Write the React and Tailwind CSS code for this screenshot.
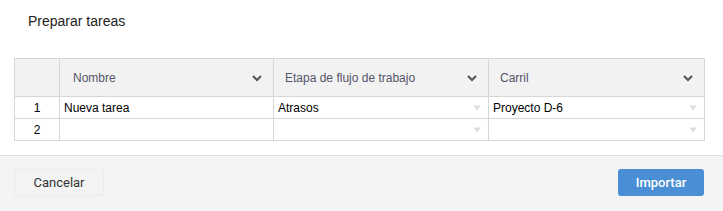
import React from "react";

const Chevron = () => (
  <svg width="12" height="8" viewBox="0 0 12 8" className="shrink-0">
    <path d="M2 2 L6 6 L10 2" fill="none" stroke="#555" strokeWidth="2" />
  </svg>
);

const Tri = () => (
  <svg width="8" height="6" viewBox="0 0 8 6" className="shrink-0">
    <path d="M0.5 0.5 L7.5 0.5 L4 5.5 Z" fill="#dcdcdc" />
  </svg>
);

export default function App() {
  const rows = [
    { n: "1", a: "Nueva tarea", b: "Atrasos", c: "Proyecto D-6" },
    { n: "2", a: "", b: "", c: "" },
  ];
  return (
    <div className="w-[723px] h-[211px] bg-white flex flex-col" style={{ fontFamily: "'Liberation Sans', Arial, sans-serif" }}>
      <div className="h-[58px] pl-[28px] pt-[11px] text-[14px] text-[#222]">Preparar tareas</div>
      <div className="pl-[14px]">
        <div className="w-[691px] border border-[#d6d6d6] text-[12px] text-black">
          <div className="grid grid-cols-[45px_214px_215px_215px] h-[38px] bg-[#f2f2f2] border-b border-[#d6d6d6]">
            <div className="border-r border-[#d6d6d6]"></div>
            <div className="border-r border-[#d6d6d6] flex items-center justify-between pl-[13px] pr-[10px] text-[#55556a]">
              <span>Nombre</span><Chevron />
            </div>
            <div className="border-r border-[#d6d6d6] flex items-center justify-between pl-[11px] pr-[10px] text-[#55556a]">
              <span>Etapa de flujo de trabajo</span><Chevron />
            </div>
            <div className="flex items-center justify-between pl-[11px] pr-[10px] text-[#55556a]">
              <span>Carril</span><Chevron />
            </div>
          </div>
          {rows.map((r, i) => (
            <div key={i} className={"grid grid-cols-[45px_214px_215px_215px] " + (i === 0 ? "h-[22px] border-b border-[#d6d6d6]" : "h-[21px]")}>
              <div className="border-r border-[#d6d6d6] flex items-center justify-center">{r.n}</div>
              <div className="border-r border-[#d6d6d6] flex items-center pl-[4px]">{r.a}</div>
              <div className="border-r border-[#d6d6d6] flex items-center justify-between pl-[4px] pr-[7px]">
                <span>{r.b}</span><Tri />
              </div>
              <div className="flex items-center justify-between pl-[4px] pr-[7px]">
                <span>{r.c}</span><Tri />
              </div>
            </div>
          ))}
        </div>
      </div>
      <div className="mt-[14px] flex-1 bg-[#f4f4f4] border-t border-[#dcdcdc] flex items-start justify-between pl-[14px] pr-[19px] pt-[13px]" style={{ fontFamily: "Roboto, 'Liberation Sans', sans-serif" }}>
        <button className="w-[90px] h-[27px] bg-[#f3f3f3] border border-[#ececec] rounded-[2px] text-[13px] text-[#333]">Cancelar</button>
        <button className="w-[86px] h-[27px] bg-[#4a8ed5] rounded-[3px] text-[13px] font-medium text-white">Importar</button>
      </div>
    </div>
  );
}
